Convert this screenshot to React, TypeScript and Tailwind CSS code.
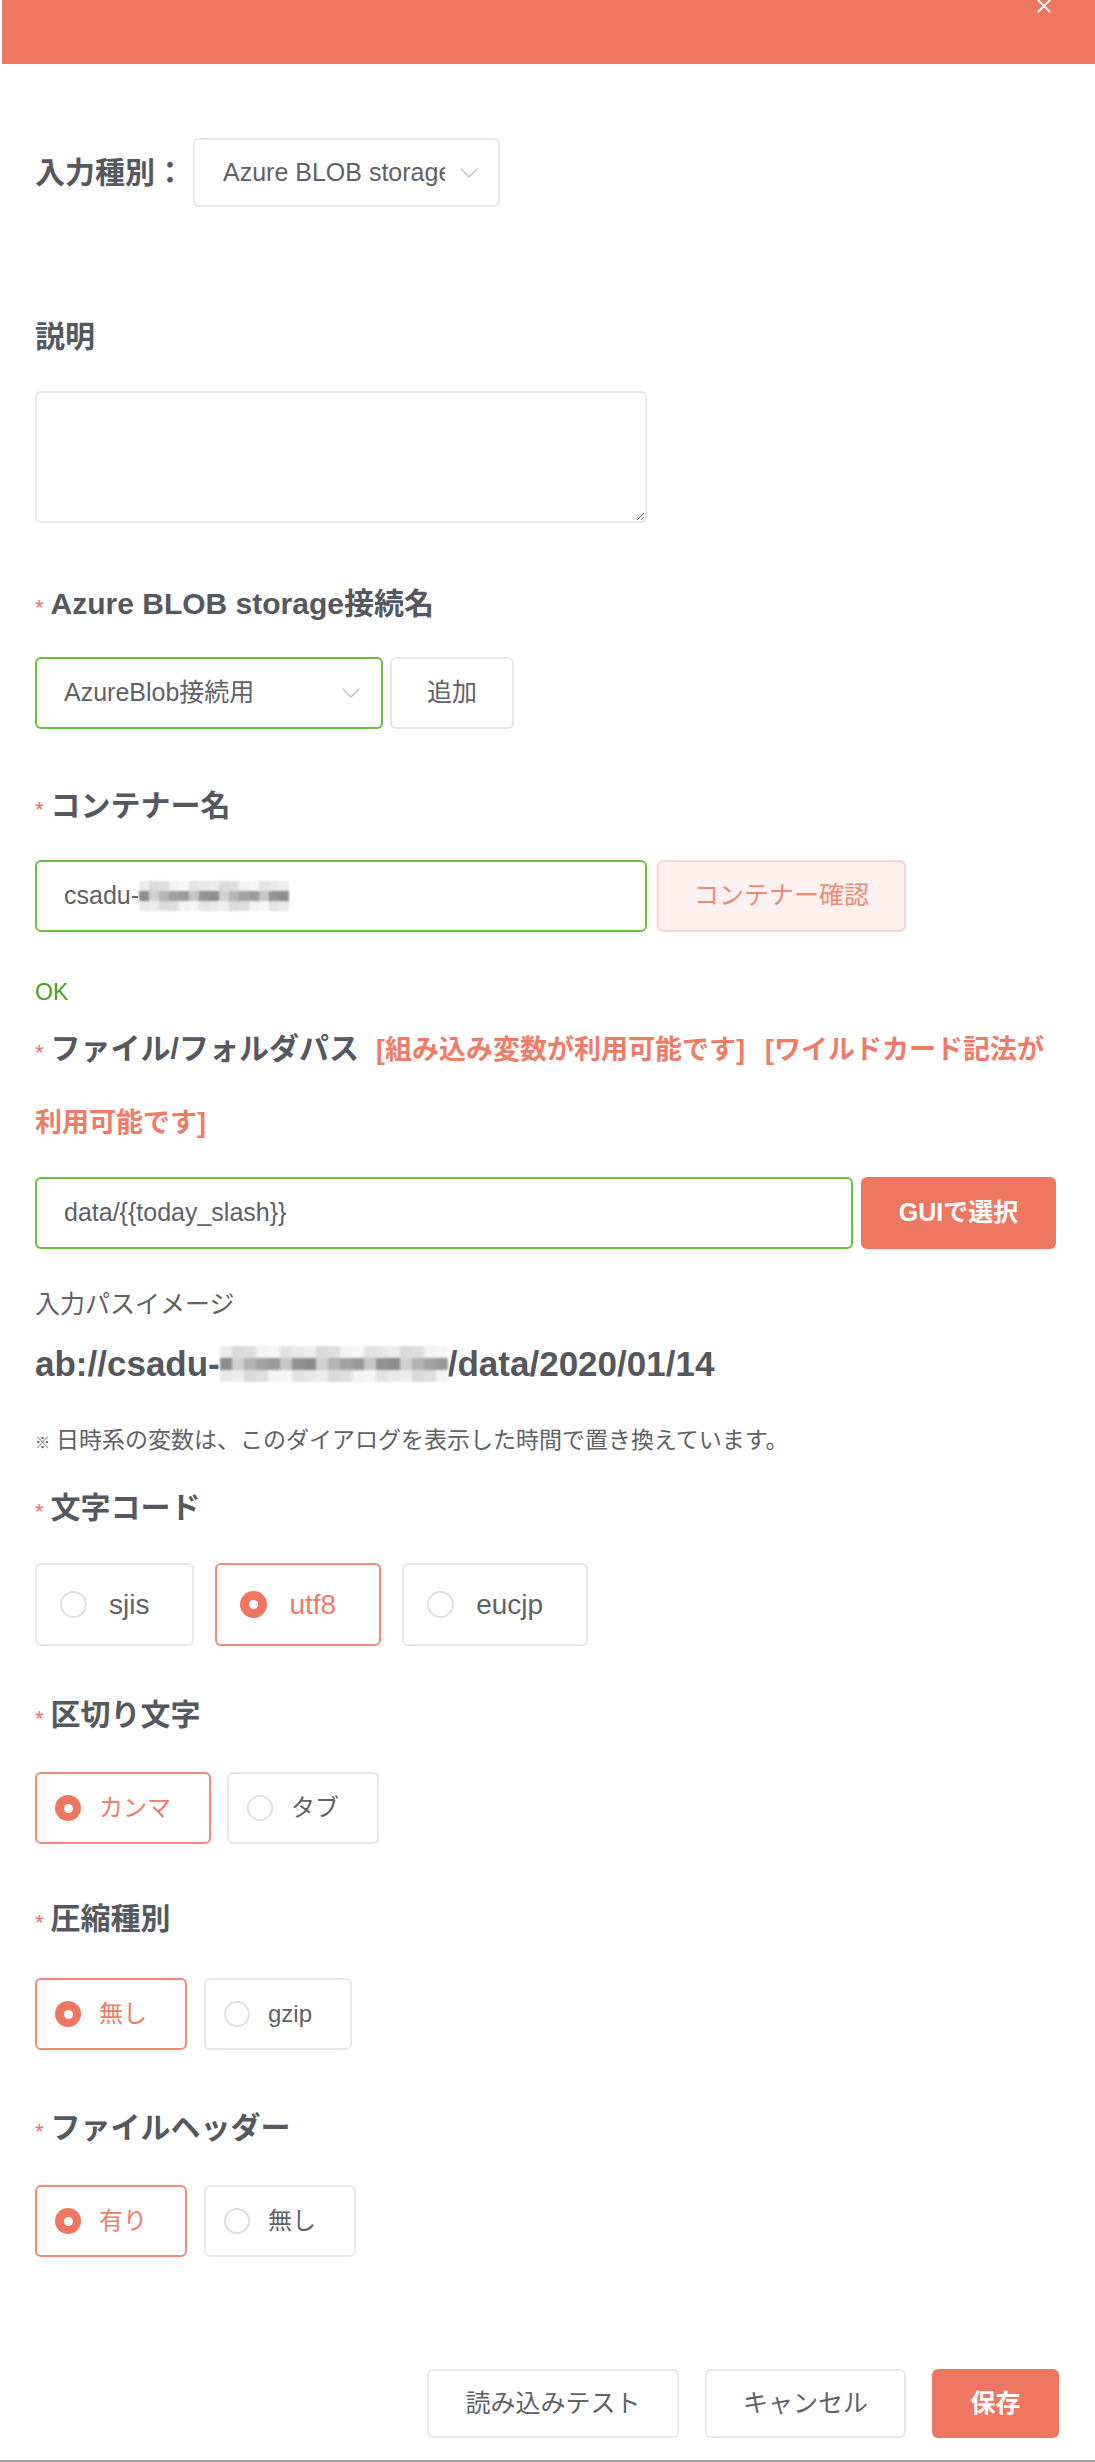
import React from 'react';
import { X, ChevronDown } from 'lucide-react';

const FONT = { fontFamily: '"Liberation Sans", "Noto Sans CJK JP", sans-serif' };

const light = ['#ececec', '#e2e2e2', '#f3f3f3', '#dadada', '#e8e8e8', '#f6f6f6', '#dedede'];
const dark = ['#9a9a9a', '#b4b4b4', '#8c8c8c', '#c6c6c6', '#a2a2a2', '#d0d0d0', '#929292'];

const Mosaic: React.FC<{ cols: number; cell: number }> = ({ cols, cell }) => {
    const rows = [light, dark, light];
    return (
        <span className="inline-flex flex-col blur-[1px] align-middle">
            {rows.map((palette, r) => (
                <span key={r} className="flex">
                    {Array.from({ length: cols }).map((_, c) => (
                        <span
                            key={c}
                            style={{ width: cell, height: cell, backgroundColor: palette[(c * 3 + r * 2) % palette.length] }}
                        />
                    ))}
                </span>
            ))}
        </span>
    );
};

const Star: React.FC<{ className?: string }> = ({ className }) => (
    <span className={`text-[#f56c6c] text-[22px] leading-none font-normal mr-[7px] relative ${className ?? ''}`}>*</span>
);

const Label: React.FC<{ text: string; required?: boolean; className?: string }> = ({ text, required, className }) => (
    <div className={`h-[72px] flex items-center text-[30px] font-bold text-[#55585e] ${className ?? ''}`}>
        {required && <Star className="top-[5px]" />}
        {text}
    </div>
);

const Radio: React.FC<{ label: string; checked?: boolean; big?: boolean }> = ({ label, checked, big }) => (
    <div
        className={`inline-flex items-center rounded-md border-2 ${
            big ? 'h-[83px] pl-[23px] pr-[43px] text-[28px]' : 'h-[72px] pl-[18px] pr-[38px] text-[24px]'
        } ${checked ? 'border-[#f28a76] text-[#f07c68]' : 'border-[#e4e7ed] text-[#606266]'}`}
    >
        <span
            className={`rounded-full flex items-center justify-center ${big ? 'w-[27px] h-[27px] mr-[22px]' : 'w-[26px] h-[26px] mr-[18px]'} ${
                checked ? 'bg-[#ef7762]' : 'border-2 border-[#dcdfe6] bg-white'
            }`}
        >
            {checked && <span className="w-[9px] h-[9px] rounded-full bg-white" />}
        </span>
        {label}
    </div>
);

const App: React.FC = () => {
    return (
        <div className="w-[1095px] bg-white text-[#606266]" style={FONT}>
            <div className="relative ml-[2px] h-[64px] bg-[#ee7762]">
                <X className="absolute right-[40px] -top-[5px] text-white" size={22} strokeWidth={2} />
            </div>

            <div className="px-[35px]">
                {/* 入力種別 */}
                <div className="mt-[74px] flex items-center">
                    <span className="text-[30px] font-bold text-[#55585e] w-[158px]">入力種別：</span>
                    <div className="w-[307px] h-[69px] border-2 border-[#e4e7ed] rounded-md flex items-center pl-[28px] text-[25px]">
                        <span className="w-[222px] overflow-hidden whitespace-nowrap">Azure BLOB storage</span>
                        <ChevronDown className="text-[#c0c4cc] ml-[8px] shrink-0" size={32} strokeWidth={1.1} />
                    </div>
                </div>

                {/* 説明 */}
                <Label text="説明" className="mt-[93px]" />
                <textarea className="mt-[19px] block w-[612px] h-[132px] border-2 border-[#e4e7ed] rounded-md outline-none" />

                {/* 接続名 */}
                <Label text="Azure BLOB storage接続名" required className="mt-[44px]" />
                <div className="mt-[18px] flex gap-[7px]">
                    <div className="w-[348px] h-[72px] border-2 border-[#67c23a] rounded-md flex items-center pl-[27px] pr-[14px] text-[25px]">
                        <span className="flex-1">AzureBlob接続用</span>
                        <ChevronDown className="text-[#c0c4cc]" size={32} strokeWidth={1.1} />
                    </div>
                    <button className="w-[124px] h-[72px] border-2 border-[#e4e7ed] rounded-md text-[25px] text-[#606266] bg-white">追加</button>
                </div>

                {/* コンテナー名 */}
                <Label text="コンテナー名" required className="mt-[40px]" />
                <div className="mt-[19px] flex gap-[10px]">
                    <div className="w-[612px] h-[72px] border-2 border-[#67c23a] rounded-md flex items-center pl-[27px] text-[25px]">
                        csadu-
                        <Mosaic cols={15} cell={10} />
                    </div>
                    <button className="w-[249px] h-[72px] border-2 border-[#fbd4cd] bg-[#fef1ef] rounded-md text-[25px] text-[#f08a76]">コンテナー確認</button>
                </div>
                <div className="mt-[45px] text-[23px] leading-[30px] text-[#4a9f22]">OK</div>

                {/* ファイル/フォルダパス */}
                <div className="mt-[5px] text-[30px] leading-[73px] font-bold text-[#55585e]">
                    <Star className="top-[1px]" />
                    ファイル/フォルダパス
                    <span className="text-[27px] leading-none text-[#f07c68] ml-[17px]">[組み込み変数が利用可能です]</span>
                    <span className="text-[27px] leading-none text-[#f07c68] ml-[20px]">[ワイルドカード記法が</span>
                    <br />
                    <span className="text-[27px] leading-none text-[#f07c68]">利用可能です]</span>
                </div>
                <div className="mt-[19px] flex gap-[8px]">
                    <div className="w-[818px] h-[72px] border-2 border-[#67c23a] rounded-md flex items-center pl-[27px] text-[25px]">
                        data/{'{{'}today_slash{'}}'}
                    </div>
                    <button className="w-[195px] h-[72px] bg-[#ee7762] rounded-md text-[25px] font-bold text-white">GUIで選択</button>
                </div>

                <div className="mt-[37px] text-[25px] leading-[36px]">入力パスイメージ</div>
                <div className="mt-[20px] text-[35px] leading-[44px] font-bold text-[#54575c] flex items-center">
                    ab://csadu-
                    <Mosaic cols={19} cell={12} />
                    /data/2020/01/14
                </div>
                <div className="mt-[38px] text-[23px] leading-[32px]">
                    <span className="text-[15px] mr-[6px]">※</span>日時系の変数は、このダイアログを表示した時間で置き換えています。
                </div>

                {/* 文字コード */}
                <Label text="文字コード" required className="mt-[12px]" />
                <div className="mt-[20px] flex gap-[21px]">
                    <Radio label="sjis" big />
                    <Radio label="utf8" big checked />
                    <Radio label="eucjp" big />
                </div>

                {/* 区切り文字 */}
                <Label text="区切り文字" required className="mt-[32px]" />
                <div className="mt-[22px] flex gap-[16px]">
                    <Radio label="カンマ" checked />
                    <Radio label="タブ" />
                </div>

                {/* 圧縮種別 */}
                <Label text="圧縮種別" required className="mt-[38px]" />
                <div className="mt-[24px] flex gap-[17px]">
                    <Radio label="無し" checked />
                    <Radio label="gzip" />
                </div>

                {/* ファイルヘッダー */}
                <Label text="ファイルヘッダー" required className="mt-[41px]" />
                <div className="mt-[22px] flex gap-[17px]">
                    <Radio label="有り" checked />
                    <Radio label="無し" />
                </div>

                {/* footer */}
                <div className="mt-[112px] flex justify-end gap-[26px] pr-[1px]">
                    <button className="w-[252px] h-[69px] border-2 border-[#e4e7ed] rounded-md text-[25px] text-[#606266] bg-white">読み込みテスト</button>
                    <button className="w-[201px] h-[69px] border-2 border-[#e4e7ed] rounded-md text-[25px] text-[#606266] bg-white">キャンセル</button>
                    <button className="w-[127px] h-[69px] bg-[#ee7762] rounded-md text-[25px] font-bold text-white">保存</button>
                </div>
            </div>
            <div className="mt-[22px] h-[2px] bg-[#a3a3a3]" />
        </div>
    );
};

export default App;
